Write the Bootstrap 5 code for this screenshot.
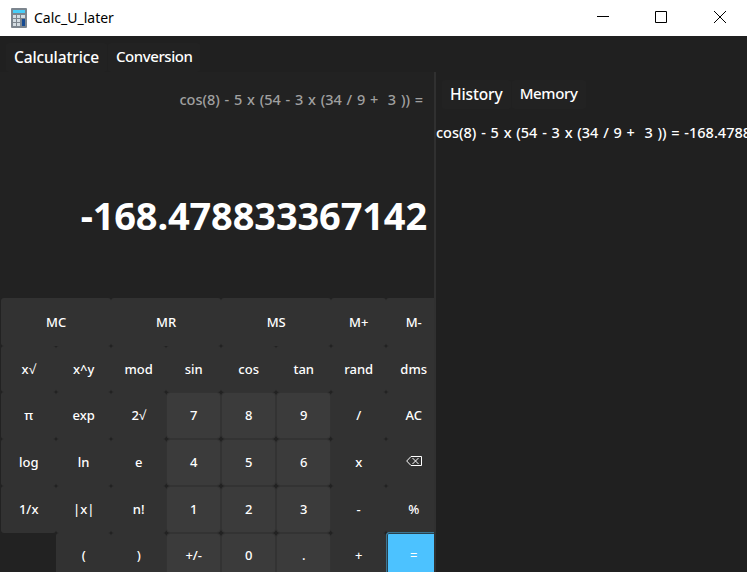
<!DOCTYPE html>
<html lang="en">
<head>
<meta charset="utf-8">
<title>Calc_U_later</title>
<link href="https://cdn.jsdelivr.net/npm/bootstrap@5.3.0/dist/css/bootstrap.min.css" rel="stylesheet">
<style>
body{width:747px;height:572px;background:#202020;color:#fff;font-family:"Noto Sans","Open Sans",sans-serif;font-size:15px;line-height:20px}
.titlebar{height:36px;background:#fff;color:#000;padding-left:11px}
.titlebar .caption{font-size:14px;letter-spacing:0;margin-left:7px}
.wbtn{width:59px;height:36px}
.wbtns{margin-right:-2px}
.tabs{height:36px;padding:7px 0 0 6px;background:#202020}
.tabs .nav-link,.side-tabs .nav-link{color:#fff;background:#222;padding:0 8px;border-radius:3px;height:29px;line-height:27px;font-weight:500;white-space:nowrap;letter-spacing:-.2px}
.tabs .nav-link.active,.side-tabs .nav-link.active{font-size:15.5px;line-height:28px;letter-spacing:-.12px}
.side-tabs .nav-link:not(.active){margin-left:1px;letter-spacing:-.35px}
.tabs .t2{letter-spacing:-.45px;margin-left:1px}
.left{width:436px;background:#222;border-right:2px solid #303030;overflow:hidden}
.side-tabs{padding:8px 0 0 6px;height:44px}
.expr{color:#a0a0a0;height:54px;padding:17px 11px 0 0}
.formula,.entry{font-size:14.5px;font-weight:500;word-spacing:1px;white-space:pre}
.result{height:172px;font-size:38px;font-weight:700;line-height:50px;letter-spacing:-.15px;padding:64px 7px 0 0}
.entry{margin-top:6px}
.keys{display:grid;grid-template-columns:repeat(8,55px);grid-template-rows:47.6px 46.6px repeat(4,46.8px);width:441px;margin-left:1px}
.key{background:#323232;border:0;border-radius:3px;padding:0 0 1px .4px;color:#fff;font-size:13px;line-height:20px;font-weight:500}
.key:nth-child(-n+13){padding-bottom:0}
.key svg{display:block;margin:-1px auto 0}
.wide{grid-column:span 2}
.num{background:#3b3b3b;border:1.5px solid #333;border-radius:4px}
.eq{background:#4cc2ff;border:1px solid #3c7592;box-shadow:inset 0 0 0 1px #28404c;margin-top:-1px;padding-bottom:0}
</style>
</head>
<body class="d-flex flex-column overflow-hidden">
<header class="titlebar d-flex align-items-center flex-shrink-0">
<svg width="16" height="20" viewBox="0 0 16 20"><rect width="16" height="20" rx="1" fill="#7c858e"/><rect x="2" y="2" width="12" height="3" fill="#48cdf7"/><path d="M2 7h3v3H2zm4 0h3v3H6zm4 0h4v3h-4zM2 11h3v3H2zm4 0h3v3H6zM2 15h3v3H2zm4 0h3v3H6z" fill="#d3dce2"/><path d="M11 11h3v7h-3z" fill="#164a91"/></svg>
<span class="caption">Calc_U_later</span>
<div class="wbtns d-flex ms-auto">
<svg class="wbtn" viewBox="0 0 59 36"><path d="M25 16.500h12" stroke="#000"/></svg>
<svg class="wbtn" viewBox="0 0 59 36"><path d="M24.500 11.500h11v11h-11z" fill="none" stroke="#000"/></svg>
<svg class="wbtn" viewBox="0 0 59 36"><path d="M24 11l12 12M36 11L24 23" stroke="#000"/></svg>
</div>
</header>
<nav class="tabs nav flex-shrink-0"><a class="nav-link active">Calculatrice</a><a class="nav-link t2">Conversion</a></nav>
<main class="d-flex flex-grow-1 overflow-hidden">
<section class="left flex-shrink-0">
<div class="expr text-end"><span class="formula">cos(8) - 5 x (54 - 3 x (34 / 9 +  3 )) =</span></div>
<div class="result text-end">-168.478833367142</div>
<div class="keys">
<button class="key wide">MC</button><button class="key wide">MR</button><button class="key wide">MS</button><button class="key">M+</button><button class="key">M-</button>
<button class="key">x√</button><button class="key">x^y</button><button class="key">mod</button><button class="key">sin</button><button class="key">cos</button><button class="key">tan</button><button class="key">rand</button><button class="key">dms</button>
<button class="key">π</button><button class="key">exp</button><button class="key">2√</button><button class="key num">7</button><button class="key num">8</button><button class="key num">9</button><button class="key">/</button><button class="key">AC</button>
<button class="key">log</button><button class="key">ln</button><button class="key">e</button><button class="key num">4</button><button class="key num">5</button><button class="key num">6</button><button class="key">x</button><button class="key" aria-label="Backspace"><svg width="16" height="10" viewBox="0 0 16 10" fill="none" stroke="#fff"><path d="M5 .5h10.500v9H5L.7 5zM6.500 2l6 6M12.500 2l-6 6"/></svg></button>
<button class="key">1/x</button><button class="key">|x|</button><button class="key">n!</button><button class="key num">1</button><button class="key num">2</button><button class="key num">3</button><button class="key">-</button><button class="key">%</button>
<span></span><button class="key">(</button><button class="key">)</button><button class="key num">+/-</button><button class="key num">0</button><button class="key num">.</button><button class="key">+</button><button class="key eq">=</button>
</div>
</section>
<aside class="flex-grow-1 overflow-hidden">
<nav class="side-tabs nav flex-nowrap"><a class="nav-link active">History</a><a class="nav-link">Memory</a></nav>
<div class="entry">cos(8) - 5 x (54 - 3 x (34 / 9 +  3 )) = -168.478833367142</div>
</aside>
</main>
<script src="https://cdn.jsdelivr.net/npm/bootstrap@5.3.0/dist/js/bootstrap.bundle.min.js"></script>
</body>
</html>
